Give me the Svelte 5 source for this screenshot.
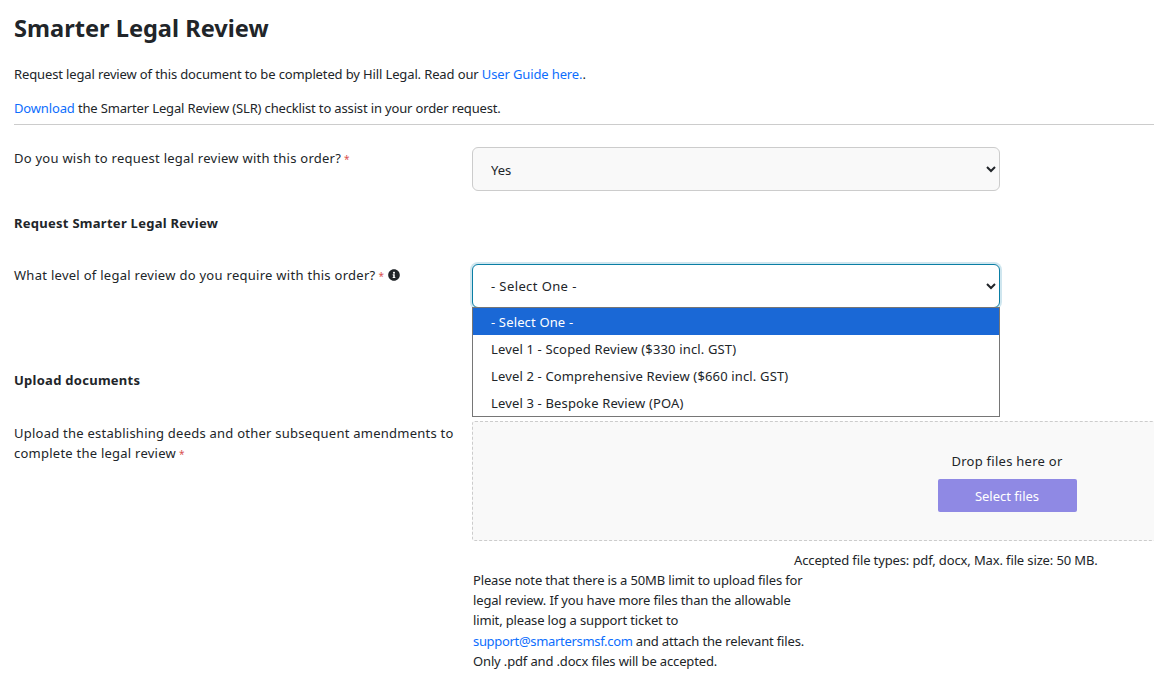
<script>
  const options = [
    '- Select One -',
    'Level 1 - Scoped Review ($330 incl. GST)',
    'Level 2 - Comprehensive Review ($660 incl. GST)',
    'Level 3 - Bespoke Review (POA)'
  ];
</script>

<div class="page">
  <h1>Smarter Legal Review</h1>
  <p class="intro">Request legal review of this document to be completed by Hill Legal. Read our <a href="#guide">User Guide here.</a>.</p>
  <p class="intro second"><a href="#download">Download</a> the Smarter Legal Review (SLR) checklist to assist in your order request.</p>
  <hr />

  <div class="row first">
    <div class="label">Do you wish to request legal review with this order?<span class="req">*</span></div>
    <div class="field">
      <select class="filled">
        <option>Yes</option>
      </select>
    </div>
  </div>

  <h2 class="section">Request Smarter Legal Review</h2>

  <div class="row level">
    <div class="label">
      What level of legal review do you require with this order?<span class="req">*</span>
      <svg class="info" viewBox="0 0 512 512" width="12" height="12" aria-hidden="true">
        <path d="M256 8C119 8 8 119 8 256s111 248 248 248 248-111 248-248S393 8 256 8zm0 110c23 0 42 19 42 42s-19 42-42 42-42-19-42-42 19-42 42-42zm56 254c0 7-5 12-12 12h-88c-7 0-12-5-12-12v-24c0-7 5-12 12-12h12v-64h-12c-7 0-12-5-12-12v-24c0-7 5-12 12-12h64c7 0 12 5 12 12v100h12c7 0 12 5 12 12v24z" />
      </svg>
    </div>
    <div class="field">
      <select class="focused">
        <option>- Select One -</option>
      </select>
      <ul class="listbox">
        {#each options as option, i}
          <li class:active={i === 0}>{option}</li>
        {/each}
      </ul>
    </div>
  </div>

  <h2 class="section upload">Upload documents</h2>

  <div class="row docs">
    <div class="label">Upload the establishing deeds and other subsequent amendments to complete the legal review<span class="req">*</span></div>
    <div class="field">
      <div class="dropzone">
        <span>Drop files here or</span>
        <button type="button">Select files</button>
      </div>
      <div class="accepted">Accepted file types: pdf, docx, Max. file size: 50 MB.</div>
      <p class="note">Please note that there is a 50MB limit to upload files for legal review. If you have more files than the allowable limit, please log a support ticket to <a href="#support">support@smartersmsf.com</a> and attach the relevant files. Only .pdf and .docx files will be accepted.</p>
    </div>
  </div>
</div>

<style>
  :global(body) {
    background: #fff;
    overflow: hidden;
  }

  .page {
    width: 1140px;
    height: 682px;
    padding-left: 14px;
    font-family: "Noto Sans", "Open Sans", sans-serif;
    font-size: 13px;
    color: #212529;
    overflow: hidden;
  }

  a {
    color: #0d6efd;
    text-decoration: none;
  }

  h1 {
    margin: 0;
    padding-top: 13px;
    font-size: 23.6px;
    line-height: 30px;
    font-weight: 700;
  }

  .intro {
    margin: 0;
    padding-top: 21px;
    line-height: 20px;
    letter-spacing: -0.13px;
  }

  .intro.second {
    padding-top: 14px;
    letter-spacing: -0.15px;
  }

  hr {
    margin: 6px 0 0;
    border: 0;
    border-top: 1px solid #ccc;
  }

  .row {
    display: grid;
    grid-template-columns: 458px 1fr;
  }

  .first {
    padding-top: 22px;
  }

  .label {
    line-height: 20px;
    padding-top: 1px;
    padding-right: 12px;
    letter-spacing: 0.25px;
  }

  .level .label {
    letter-spacing: 0.28px;
  }

  .docs .label {
    padding-top: 2px;
    letter-spacing: 0.24px;
  }

  .req {
    color: #d9534f;
    margin-left: 3px;
    font-size: 10px;
  }

  .info {
    margin-left: 0;
    vertical-align: -1px;
    fill: #212529;
  }

  .field {
    position: relative;
    min-width: 0;
  }

  select {
    display: block;
    width: 528px;
    height: 44px;
    padding: 0 14px;
    border: 1px solid #ccc;
    border-radius: 6px;
    font: inherit;
    color: #212529;
    background: #fff;
  }

  select.filled {
    padding-top: 2px;
    background: #f9f9f9;
  }

  select.focused {
    border-color: #0a7ea4;
    box-shadow: 0 0 0 2px #cfe6ef;
    outline: none;
    letter-spacing: 0.4px;
  }

  .section {
    margin: 0;
    font-size: 13px;
    line-height: 20px;
    font-weight: 700;
    letter-spacing: 0.27px;
  }

  .row + .section {
    padding-top: 22px;
  }

  .level {
    padding-top: 31px;
  }

  .section.upload {
    padding-top: 62px;
  }

  .docs {
    padding-top: 31px;
  }

  .listbox {
    position: absolute;
    z-index: 2;
    top: 43px;
    left: 0;
    width: 528px;
    box-sizing: border-box;
    margin: 0;
    padding: 0;
    list-style: none;
    background: #fff;
    border: 1px solid #767676;
    letter-spacing: 0.15px;
  }

  .listbox li {
    height: 27px;
    line-height: 29px;
    padding-left: 18px;
  }

  .listbox li.active {
    background: #1a68d6;
    color: #fff;
  }

  .dropzone {
    width: 1070px;
    height: 120px;
    box-sizing: border-box;
    padding-top: 2px;
    border: 1px dashed #ccc;
    border-radius: 3px;
    background: #f9f9f9;
    display: flex;
    flex-direction: column;
    align-items: center;
    justify-content: center;
    gap: 9px;
    letter-spacing: 0.27px;
  }

  button {
    width: 139px;
    height: 33px;
    padding-top: 2px;
    border: 0;
    border-radius: 2px;
    background: #8f89e4;
    color: #fff;
    font: inherit;
  }

  .accepted {
    margin-left: 322px;
    line-height: 20px;
    padding-top: 9px;
    letter-spacing: -0.13px;
  }

  .note {
    margin: 0 0 0 1px;
    width: 335px;
    line-height: 20.2px;
    letter-spacing: -0.15px;
  }

  .note a {
    letter-spacing: -0.32px;
  }
</style>
